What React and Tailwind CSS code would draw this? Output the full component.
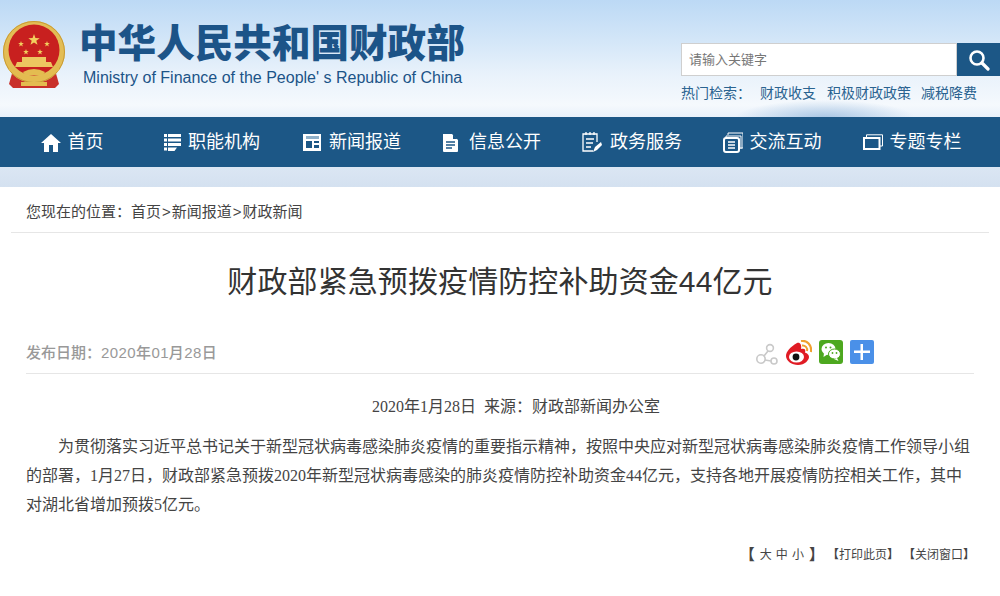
import React from 'react'

const navItems = [
  { label: '首页', icon: HomeIcon },
  { label: '职能机构', icon: ListIcon },
  { label: '新闻报道', icon: NewsIcon },
  { label: '信息公开', icon: FileIcon },
  { label: '政务服务', icon: PadIcon },
  { label: '交流互动', icon: CopyIcon },
  { label: '专题专栏', icon: WindowIcon },
]

function HomeIcon() {
  return (
    <svg width="20" height="19" viewBox="0 0 20 19" fill="#fff">
      <path d="M10 1 L20 10 L17 10 L17 19 L12 19 L12 12 L8 12 L8 19 L3 19 L3 10 L0 10 Z" />
    </svg>
  )
}

function ListIcon() {
  return (
    <svg width="17" height="19" viewBox="0 0 17 19" fill="#fff">
      <rect x="0" y="1" width="3" height="3" />
      <rect x="0" y="5.5" width="3" height="3" />
      <rect x="0" y="10" width="3" height="3" />
      <rect x="0" y="14.5" width="3" height="3" />
      <rect x="4" y="1" width="13" height="3" />
      <rect x="4" y="5.5" width="13" height="3" />
      <rect x="4" y="10" width="13" height="3" />
      <path d="M4 14.5 H13 L10.5 18 H4 Z" />
    </svg>
  )
}

function NewsIcon() {
  return (
    <svg width="19" height="19" viewBox="0 0 19 19">
      <rect x="0" y="1" width="18" height="17" fill="#fff" />
      <rect x="3" y="3" width="13" height="3" fill="#8fb0c9" />
      <rect x="3" y="8" width="6" height="7" fill="#1c5786" />
      <rect x="11" y="8" width="5" height="2" fill="#1c5786" />
      <rect x="11" y="12" width="5" height="3" fill="#1c5786" />
    </svg>
  )
}

function FileIcon() {
  return (
    <svg width="15" height="19" viewBox="0 0 15 19" className="mr-[4px]">
      <path d="M0 1 H9 L15 7 V18 Q15 19 14 19 H1 Q0 19 0 18 Z" fill="#fff" />
      <path d="M10 1.5 L14.5 6 H10 Z" fill="#1c5786" />
      <path d="M3 9 H12 M3 12 H12 M3 15 H9" stroke="#1c5786" strokeWidth="1.4" />
    </svg>
  )
}

function PadIcon() {
  return (
    <svg width="21" height="21" viewBox="0 0 21 21" fill="none" stroke="#fff" strokeWidth="1.3">
      <path d="M11 19 H1 V2 H15 V10" />
      <path d="M4 0 V3 M8 0 V3 M12 0 V3 M4 7 H12 M4 11 H11 M4 15 H9" />
      <path d="M11 20 L13 15 L19 10 L20 13 L15 18 Z" fill="#fff" stroke="none" />
    </svg>
  )
}

function CopyIcon() {
  return (
    <svg width="20" height="21" viewBox="0 0 20 21" fill="none">
      <path d="M5 3 V1 H20 V16 H17" stroke="#fff" strokeWidth="1" />
      <path d="M3 6 V4 H18 V17" stroke="#fff" strokeWidth="1" />
      <rect x="1" y="6" width="15" height="14" rx="2" stroke="#fff" strokeWidth="2" />
      <path d="M5 10 H12 M5 13 H12 M5 16 H12" stroke="#fff" strokeWidth="1.5" />
    </svg>
  )
}

function WindowIcon() {
  return (
    <svg width="20" height="16" viewBox="0 0 20 16" fill="none" stroke="#fff">
      <path d="M3.5 3 V0.8 H19.5 V12 H17" strokeWidth="1" />
      <rect x="1" y="4" width="15.5" height="11" strokeWidth="2" />
    </svg>
  )
}

function Emblem() {
  const stars = [[33, 20, 6], [20, 24, 3], [25, 32, 3], [39, 32, 3], [46, 24, 3]]
  return (
    <svg width="66" height="70" viewBox="0 0 66 70" className="shrink-0">
      <path d="M12 50 L8 64 L12 68 H54 L58 64 L54 50 Z" fill="#c9302a" />
      <circle cx="33" cy="32" r="31" fill="#e3bd55" />
      <circle cx="33" cy="32" r="30.5" fill="none" stroke="#c99b33" strokeWidth="1" />
      <circle cx="33" cy="30" r="25.5" fill="#c8201f" />
      {stars.map(([x, y, r]) => (
        <polygon
          key={x}
          fill="#f2cf5e"
          points={[0, 1, 2, 3, 4, 5, 6, 7, 8, 9]
            .map((i) => {
              const a = (i * Math.PI) / 5 - Math.PI / 2
              const d = i % 2 ? r * 0.4 : r
              return `${x + d * Math.cos(a)},${y + d * Math.sin(a)}`
            })
            .join(' ')}
        />
      ))}
      <path d="M14 47 H52 L50 42 H45 V37 H21 V42 H16 Z" fill="#edc660" />
      <path d="M22 52 Q33 46 44 52 L42 55 H24 Z" fill="#e4bc50" />
      <path d="M8 46 Q33 68 58 46 L58 50 Q33 72 8 50 Z" fill="#e4bc50" />
      <rect x="20" y="62" width="26" height="4" fill="#e4bc50" />
    </svg>
  )
}

function SearchIcon() {
  return (
    <svg width="22" height="22" viewBox="0 0 22 22" fill="none" stroke="#fff">
      <circle cx="9" cy="9" r="6.5" strokeWidth="2.6" />
      <path d="M14 14 L20 20" strokeWidth="3.2" strokeLinecap="round" />
    </svg>
  )
}

function ShareIcon() {
  return (
    <svg width="24" height="24" viewBox="0 0 24 24" fill="none" stroke="#c9c9c9" strokeWidth="1.6" className="mt-[5px]">
      <circle cx="15" cy="5" r="3.4" />
      <circle cx="6" cy="16" r="4.2" />
      <circle cx="19" cy="18" r="3" />
      <path d="M13 8 L9 13 M10 17 L16 18" />
    </svg>
  )
}

function WeiboIcon() {
  return (
    <svg width="26" height="25" viewBox="0 0 26 25" fill="none">
      <path d="M11 3 C4 7 0 12 0 16 C0 21 6 25 12 25 C19 25 23 20 23 17 C23 14 20 13 19 12.5 C20 10 19 8 15 9 C16 5 14 2 11 3 Z" fill="#e01b24" />
      <ellipse cx="10.5" cy="17" rx="7.5" ry="5.5" fill="#fff" />
      <circle cx="10" cy="17" r="3.4" fill="#111" />
      <path d="M15 1 C21 0 26 5 25 12" stroke="#f0a030" strokeWidth="2.2" />
      <path d="M16 5.5 C19 5 22 8 21 11" stroke="#f0a030" strokeWidth="2" />
    </svg>
  )
}

function WechatIcon() {
  return (
    <svg width="24" height="24" viewBox="0 0 24 24">
      <rect width="24" height="24" rx="3" fill="#4da81f" />
      <ellipse cx="9.5" cy="9" rx="7" ry="6" fill="#fff" />
      <path d="M5 13 L4.5 17 L9 14 Z" fill="#fff" />
      <ellipse cx="15.5" cy="14" rx="6" ry="5" fill="#fff" stroke="#4da81f" />
      <path d="M18 18 L19.5 21 L15 19 Z" fill="#fff" />
      <circle cx="7" cy="7.5" r="1" fill="#4da81f" />
      <circle cx="11.5" cy="7.5" r="1" fill="#4da81f" />
      <circle cx="13.5" cy="13" r="0.9" fill="#4da81f" />
      <circle cx="17.5" cy="13" r="0.9" fill="#4da81f" />
    </svg>
  )
}

function PlusIcon() {
  return (
    <svg width="24" height="24" viewBox="0 0 24 24">
      <rect width="24" height="24" rx="2" fill="#4a90e8" />
      <path d="M4 10.5 H10.5 V4 H13 V10.5 H20 V13 H13 V20 H10.5 V13 H4 Z" fill="#fff" />
    </svg>
  )
}

function Bracketed({ children }) {
  return (
    <span className="whitespace-nowrap">
      <span className="-ml-[6px] font-bold">【</span>
      {children}
      <span className="-mr-[6px] font-bold">】</span>
    </span>
  )
}

export default function App() {
  return (
    <div className="h-[596px] overflow-hidden bg-white font-['Liberation_Sans','Noto_Sans_CJK_SC',sans-serif] text-[#333]">
      <div className="bg-[radial-gradient(ellipse_90px_18px_at_825px_118px,#a9c6e4_0%,transparent_100%),linear-gradient(180deg,#bcd9f5_0px,#d3e6f8_40px,#e9f2fb_75px,#f5f9fd_105px,#e9f1fa_117px,#dbe6f3_167px,#d4e1f0_187px)]">
        <header className="flex h-[117px] justify-between">
          <div className="flex pl-[1px] pt-[20px]">
            <Emblem />
            <div className="ml-[12px] text-[#1c5488]">
              <div className="mt-[1px] text-[38.6px] font-black leading-[46px] whitespace-nowrap">中华人民共和国财政部</div>
              <div className="ml-[4px] mt-[1px] text-[16px] leading-[20px] whitespace-nowrap">Ministry of Finance of the People' s Republic of China</div>
            </div>
          </div>
          <div className="w-[319px] pt-[43px]">
            <div className="flex h-[33px]">
              <div className="flex flex-1 items-center border border-[#cfcfcf] bg-white pl-[7px] text-[13px] text-[#777]">请输入关键字</div>
              <div className="flex w-[43px] items-center justify-center bg-[#1c5786]">
                <SearchIcon />
              </div>
            </div>
            <div className="mt-[7px] flex text-[14px] leading-[20px] text-[#2a6390]">
              <span className="w-[79px]">热门检索：</span>
              <span className="w-[67px]">财政收支</span>
              <span className="w-[94px]">积极财政政策</span>
              <span>减税降费</span>
            </div>
          </div>
        </header>
        <nav className="flex h-[50px] bg-[#1c5786] pl-[2px] text-[18px] text-white">
          {navItems.map(({ label, icon: Icon }) => (
            <div key={label} className="flex w-[140px] items-center justify-center gap-[7px]">
              <Icon />
              <span>{label}</span>
            </div>
          ))}
        </nav>
        <div className="h-[20px]" />
      </div>

      <main className="px-[11px]">
        <div className="flex h-[46px] items-center border-b border-[#e6e6e6] pl-[15px] pt-[6px] text-[15px] text-[#444]">
          您现在的位置：首页<span className="mx-[1px]">&gt;</span>新闻报道<span className="mx-[1px]">&gt;</span>财政新闻
        </div>
        <h1 className="mt-[27px] text-center text-[30px] leading-[44px] tracking-[0.1px] text-[#333]">财政部紧急预拨疫情防控补助资金44亿元</h1>
        <div className="mx-[15px] mt-[30px] flex h-[40px] items-center justify-between border-b border-[#e6e6e6]">
          <span className="text-[15px] font-medium text-[#999]">发布日期：<span className="tracking-[0.4px]">2020年01月28日</span></span>
          <div className="mr-[100px] flex items-center gap-[7px] pb-[3px]">
            <ShareIcon />
            <WeiboIcon />
            <WechatIcon />
            <PlusIcon />
          </div>
        </div>
        <div className="mx-[15px] font-['Liberation_Serif','Noto_Sans_CJK_SC',serif] text-[16px] text-[#444]">
          <p className="mt-[21px] indent-[32px] text-center leading-[24px]">2020年1月28日&nbsp;&nbsp;来源：财政部新闻办公室</p>
          <p className="mt-[13px] indent-[32px] leading-[29px]">
            为贯彻落实习近平总书记关于新型冠状病毒感染肺炎疫情的重要指示精神，按照中央应对新型冠状病毒感染肺炎疫情工作领导小组的部署，1月27日，财政部紧急预拨2020年新型冠状病毒感染的肺炎疫情防控补助资金44亿元，支持各地开展疫情防控相关工作，其中对湖北省增加预拨5亿元。
          </p>
        </div>
        <div className="mr-[20px] mt-[26px] flex items-center justify-end gap-[16px] text-[12px] leading-[20px] text-[#444]">
          <span className="flex items-center gap-[4px] whitespace-nowrap">
            <span className="-ml-[7px] mr-[1px] text-[15px] font-bold">【</span>
            <span>大</span>
            <span>中</span>
            <span>小</span>
            <span className="ml-[1px] -mr-[7px] text-[15px] font-bold">】</span>
          </span>
          <Bracketed>打印此页</Bracketed>
          <Bracketed>关闭窗口</Bracketed>
        </div>
      </main>
    </div>
  )
}
